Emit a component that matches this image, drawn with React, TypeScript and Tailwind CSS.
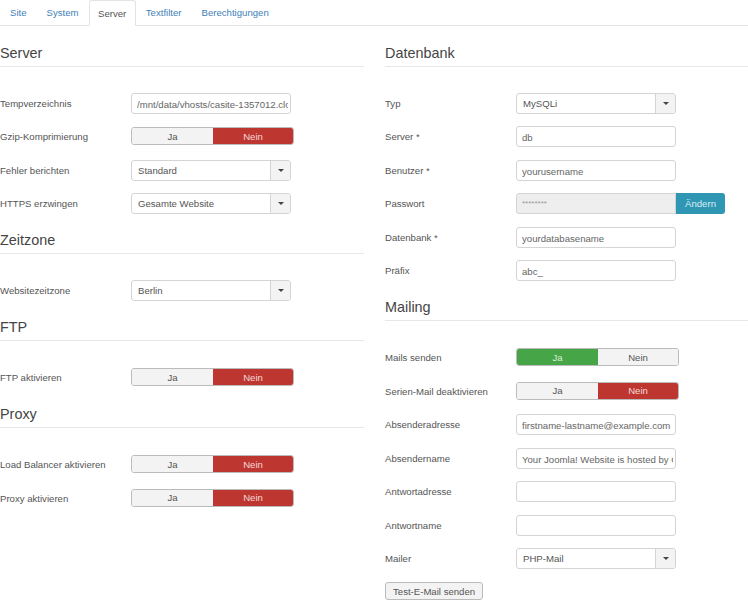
import React from "react";

const font = "font-['Liberation_Sans',Arial,sans-serif]";

const Legend = ({ title }: { title: string }) => (
  <div className="h-[27.5px] mb-[26px] border-b border-[#e8e8e8] flex items-center text-[14.4px] leading-none text-[#444] pt-[1px]">
    {title}
  </div>
);

const Row = ({ label, children }: { label: string; children: React.ReactNode }) => (
  <div className="flex items-center h-[21px] mb-[12.5px]">
    <label className="w-[131px] shrink-0 pt-[2px] text-[9.6px] text-[#555]">{label}</label>
    {children}
  </div>
);

const TextInput = ({ value = "" }: { value?: string }) => (
  <input
    readOnly
    value={value}
    className="w-[160px] h-[21px] rounded-[3px] border border-[#d4d4d4] bg-white pl-[5px] pr-[2px] pt-[2px] text-[9.6px] text-[#666] outline-none"
  />
);

const Select = ({ value }: { value: string }) => (
  <div className="w-[160px] h-[21px] flex rounded-[3px] border border-[#d4d4d4] bg-white overflow-hidden">
    <span className="flex-1 flex items-center pl-[6px] pt-[2px] text-[9.6px] text-[#555]">{value}</span>
    <span className="w-[20px] flex items-center justify-center border-l border-[#d4d4d4] bg-[#f3f3f3]">
      <span className="w-0 h-0 border-l-[3px] border-r-[3px] border-t-[3px] border-l-transparent border-r-transparent border-t-[#444]" />
    </span>
  </div>
);

const Toggle = ({ active }: { active: "ja" | "nein" }) => (
  <div className="w-[163px] h-[18px] -mt-[1px] flex text-[9.6px] rounded-[3px] overflow-hidden border border-[#bbb]">
    <span
      className={
        active === "ja"
          ? "w-[81px] pt-[2px] flex items-center justify-center bg-[#46a546] text-[#d9efd9]"
          : "w-[81px] pt-[2px] flex items-center justify-center bg-[#f3f3f3] text-[#555]"
      }
    >
      Ja
    </span>
    <span
      className={
        active === "nein"
          ? "flex-1 pt-[2px] flex items-center justify-center bg-[#bd362f] text-[#f3d9d7]"
          : "flex-1 pt-[2px] flex items-center justify-center bg-[#f3f3f3] text-[#555]"
      }
    >
      Nein
    </span>
  </div>
);

const tabs = ["Site", "System", "Server", "Textfilter", "Berechtigungen"];

export default function App() {
  return (
    <div className={`${font} w-[748px] h-[600px] overflow-hidden bg-white`}>
      <div className="flex h-[26px] border-b border-[#e4e4e4] text-[9.6px]">
        {tabs.map((tab) =>
          tab === "Server" ? (
            <span
              key={tab}
              className="h-[26px] px-[8.5px] pt-[2px] flex items-center bg-white text-[#555] border border-[#e4e4e4] border-b-white rounded-t-[3px]"
            >
              {tab}
            </span>
          ) : (
            <span key={tab} className="h-[25px] px-[10px] pt-[2px] flex items-center text-[#3f7fb8]">
              {tab}
            </span>
          )
        )}
      </div>
      <div className="flex pt-[13px]">
        <div className="w-[364px]">
          <Legend title="Server" />
          <Row label="Tempverzeichnis">
            <TextInput value="/mnt/data/vhosts/casite-1357012.cloudaccess.host/tmp" />
          </Row>
          <Row label="Gzip-Komprimierung">
            <Toggle active="nein" />
          </Row>
          <Row label="Fehler berichten">
            <Select value="Standard" />
          </Row>
          <Row label="HTTPS erzwingen">
            <Select value="Gesamte Website" />
          </Row>
          <Legend title="Zeitzone" />
          <Row label="Websitezeitzone">
            <Select value="Berlin" />
          </Row>
          <Legend title="FTP" />
          <Row label="FTP aktivieren">
            <Toggle active="nein" />
          </Row>
          <Legend title="Proxy" />
          <Row label="Load Balancer aktivieren">
            <Toggle active="nein" />
          </Row>
          <Row label="Proxy aktivieren">
            <Toggle active="nein" />
          </Row>
        </div>
        <div className="w-[363px] ml-[21px]">
          <Legend title="Datenbank" />
          <Row label="Typ">
            <Select value="MySQLi" />
          </Row>
          <Row label="Server *">
            <TextInput value="db" />
          </Row>
          <Row label="Benutzer *">
            <TextInput value="yourusername" />
          </Row>
          <Row label="Passwort">
            <div className="flex">
              <input
                readOnly
                value="********"
                className="w-[160px] h-[21px] rounded-l-[3px] border border-[#d4d4d4] bg-[#eeeeee] pl-[5px] text-[8px] text-[#999] outline-none"
              />
              <span className="w-[49px] h-[21px] pt-[2px] flex items-center justify-center rounded-r-[3px] bg-[#2f96b4] text-[9.6px] text-[#d8eef5]">
                Ändern
              </span>
            </div>
          </Row>
          <Row label="Datenbank *">
            <TextInput value="yourdatabasename" />
          </Row>
          <Row label="Präfix">
            <TextInput value="abc_" />
          </Row>
          <Legend title="Mailing" />
          <Row label="Mails senden">
            <Toggle active="ja" />
          </Row>
          <Row label="Serien-Mail deaktivieren">
            <Toggle active="nein" />
          </Row>
          <Row label="Absenderadresse">
            <TextInput value="firstname-lastname@example.com" />
          </Row>
          <Row label="Absendername">
            <TextInput value="Your Joomla! Website is hosted by CloudAccess.net" />
          </Row>
          <Row label="Antwortadresse">
            <TextInput />
          </Row>
          <Row label="Antwortname">
            <TextInput />
          </Row>
          <Row label="Mailer">
            <Select value="PHP-Mail" />
          </Row>
          <button className="block h-[18px] px-[7px] pt-[2px] rounded-[3px] border border-[#bbb] bg-[#f3f3f3] text-[9.6px] text-[#555]">
            Test-E-Mail senden
          </button>
        </div>
      </div>
    </div>
  );
}
